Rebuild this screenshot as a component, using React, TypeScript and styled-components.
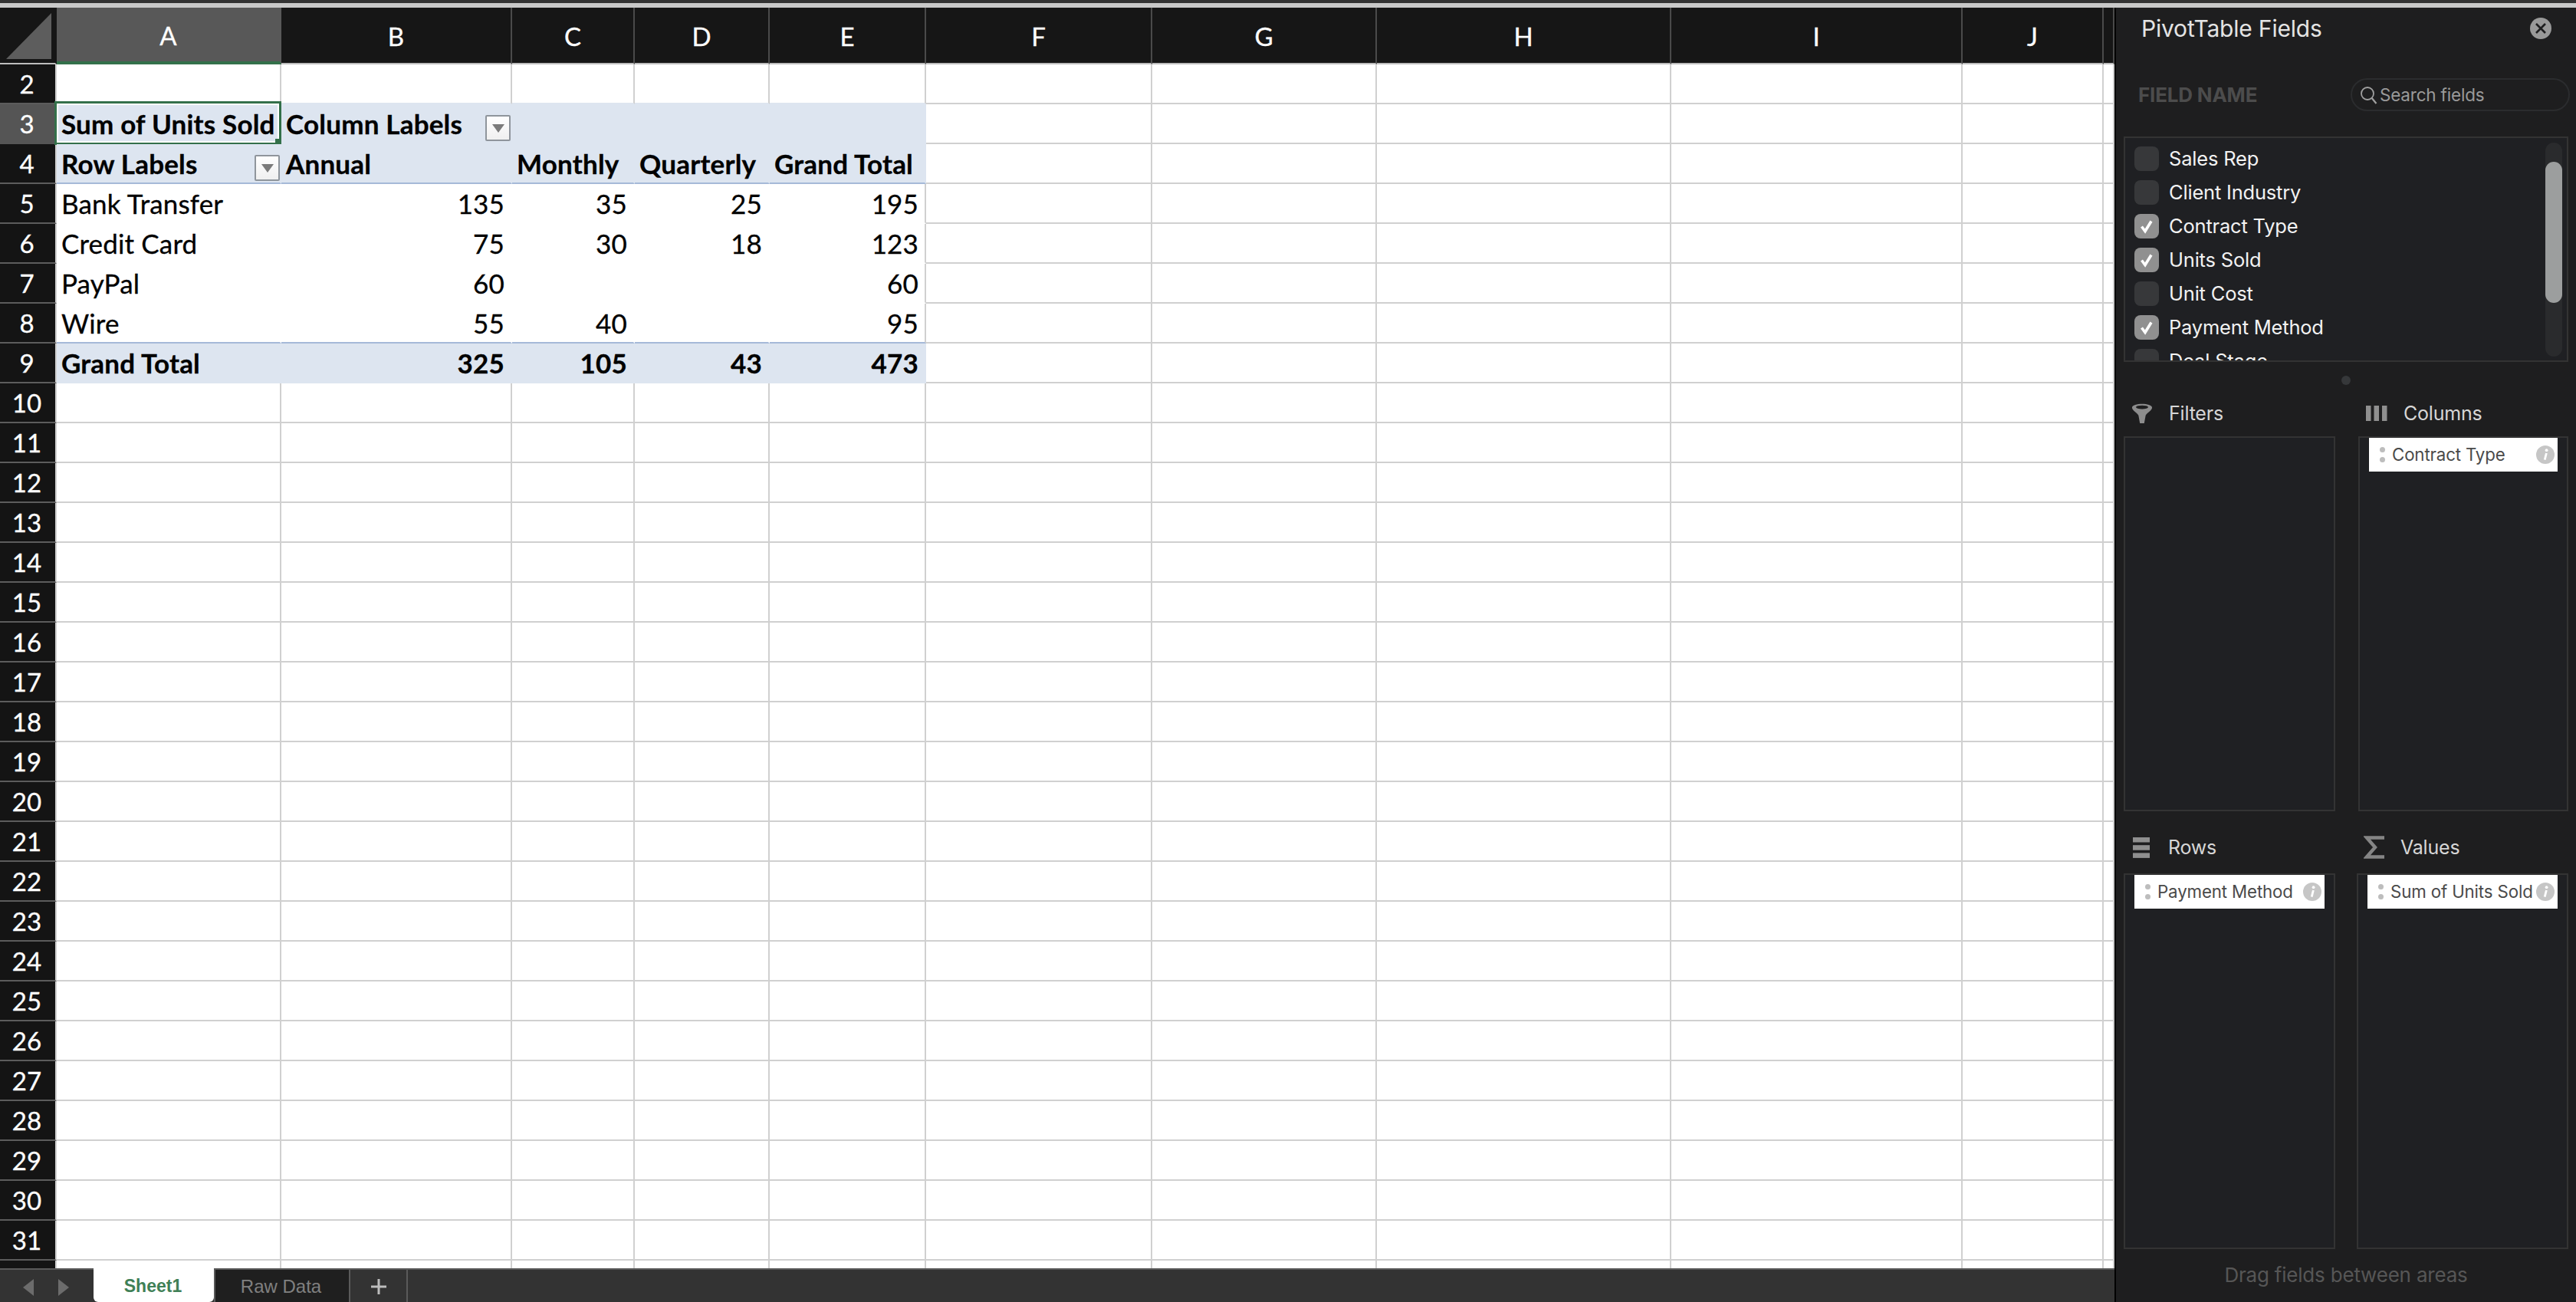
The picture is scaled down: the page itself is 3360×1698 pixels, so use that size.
import React from "react";
import styled, { createGlobalStyle } from "styled-components";

const Global = createGlobalStyle`
  html, body { margin: 0; padding: 0; height: 100%; background: #1e1e1f; overflow: hidden; }
  #root { height: 100%; }
  * { box-sizing: border-box; }
`;

const CELL_FONT = `Lato, "Open Sans", sans-serif`;
const UI_FONT = `Inter, "Liberation Sans", sans-serif`;
const COLS = [293, 301, 160, 176, 204, 295, 293, 384, 380, 184, 14];
const COL_LABELS = ["A", "B", "C", "D", "E", "F", "G", "H", "I", "J", ""];
const TEMPLATE = `74px ${COLS.map((c) => c + "px").join(" ")}`;
const GRID_LINE = "#d0d0d0";

const Page = styled.div`
  height: 1698px;
  width: 3360px;
  display: flex;
  flex-direction: column;
  overflow: hidden;
`;
const TopStrip = styled.div`
  height: 10px;
  flex: none;
  background: #333;
  border-bottom: 6px solid #c9c9c9;
`;
const Main = styled.div`
  flex: 1;
  min-height: 0;
  display: flex;
`;
const Sheet = styled.div`
  width: 2758px;
  flex: none;
  display: flex;
  flex-direction: column;
  background: #fff;
`;
const GridClip = styled.div`
  flex: 1;
  min-height: 0;
  overflow: hidden;
`;
const SheetGrid = styled.div`
  display: grid;
  grid-template-columns: ${TEMPLATE};
  grid-template-rows: 74px;
  grid-auto-rows: 52px;
  font-family: ${CELL_FONT};
`;
const Corner = styled.div`
  background: #161616;
  border-right: 2px solid #161616;
  border-bottom: 2px solid #bdbdbd;
  display: flex;
`;
const ColHead = styled.div<{ $active?: boolean }>`
  background: ${(p) => (p.$active ? "#585858" : "#161616")};
  color: #fff;
  font-size: 33px;
  -webkit-text-stroke: 0.3px #fff;
  display: flex;
  align-items: center;
  justify-content: center;
  padding-top: 2px;
  border-right: 2px solid ${(p) => (p.$active ? "#585858" : "#4a4a4a")};
  border-bottom: ${(p) => (p.$active ? "4px solid #33704a" : "2px solid #bdbdbd")};
`;
const RowHead = styled.div<{ $active?: boolean }>`
  background: ${(p) => (p.$active ? "#555" : "#141414")};
  color: #fff;
  font-size: 33px;
  -webkit-text-stroke: 0.3px #fff;
  display: flex;
  align-items: center;
  justify-content: center;
  padding-right: 2px;
  border-right: 2px solid #d0d0d0;
  border-bottom: 2px solid ${(p) => (p.$active ? "#555" : "#5c5c5c")};
`;

type Tone = "plain" | "above" | "fill" | "head" | "body" | "lastBody" | "total";
const bottomColor: Record<Tone, string> = {
  plain: GRID_LINE,
  above: "#dde5f0",
  fill: "#dde5f0",
  head: "#a5b9d8",
  body: "#fff",
  lastBody: "#a5b9d8",
  total: "#dde5f0",
};
const isStrong = (t: Tone) => t === "fill" || t === "head" || t === "total";
const Cell = styled.div<{ $tone: Tone; $right?: boolean; $edge?: boolean }>`
  position: relative;
  background: ${(p) => (isStrong(p.$tone) ? "#dde5f0" : "#fff")};
  color: #000;
  font-size: 35px;
  letter-spacing: ${(p) => (isStrong(p.$tone) ? "0.2px" : "0.15px")};
  -webkit-text-stroke: 0.3px #000;
  font-weight: ${(p) => (isStrong(p.$tone) ? 700 : 400)};
  white-space: nowrap;
  display: flex;
  align-items: center;
  justify-content: ${(p) => (p.$right ? "flex-end" : "space-between")};
  padding: 0 ${(p) => (p.$right ? "8px" : "0")} 0 6px;
  border-bottom: 2px solid ${(p) => bottomColor[p.$tone]};
  border-right: 2px solid
    ${(p) =>
      p.$tone === "plain" || p.$tone === "above" || (p.$edge && (p.$tone === "body" || p.$tone === "lastBody"))
        ? GRID_LINE
        : "transparent"};
`;
const Selection = styled.div`
  position: absolute;
  inset: -4px -2px -3px -3px;
  border: 3px solid #33704a;
  box-shadow: inset 0 0 0 2px #fff;
  pointer-events: none;
  &::after {
    content: "";
    position: absolute;
    right: -6px;
    bottom: -6px;
    width: 11px;
    height: 11px;
    background: #33704a;
  }
`;
const FilterBtn = styled.span`
  width: 33px;
  height: 34px;
  flex: none;
  margin-top: 12px;
  border: 2px solid #8f959c;
  border-radius: 2px;
  background: linear-gradient(#fff, #f0f0f0);
  display: flex;
  align-items: center;
  justify-content: center;
`;
const FilterArrow = styled.span`
  width: 0;
  height: 0;
  border-left: 8px solid transparent;
  border-right: 8px solid transparent;
  border-top: 11px solid #7b7b7b;
`;

const TabBar = styled.div`
  height: 44px;
  flex: none;
  display: flex;
  background: #333;
  border-top: 2px solid #5a5a5a;
  font-family: "Liberation Sans", Arial, sans-serif;
  font-size: 23px;
  position: relative;
  z-index: 1;
`;
const TabNav = styled.div`
  width: 122px;
  display: flex;
  align-items: center;
  padding: 4px 0 0 30px;
  gap: 32px;
`;
const Tab = styled.div<{ $active?: boolean }>`
  display: flex;
  align-items: center;
  justify-content: center;
  padding: 2px ${(p) => (p.$active ? "2px" : "3px")} 0 0;
  margin-top: ${(p) => (p.$active ? "-2px" : "0")};
  width: ${(p) => (p.$active ? "157px" : "176px")};
  background: ${(p) => (p.$active ? "#fff" : "#1f1f1f")};
  color: ${(p) => (p.$active ? "#3f8056" : "#808080")};
  font-size: ${(p) => (p.$active ? "23px" : "24px")};
  font-weight: ${(p) => (p.$active ? 700 : 400)};
  border-radius: ${(p) => (p.$active ? "0 0 6px 6px" : "0")};
  border-left: ${(p) => (p.$active ? "none" : "2px solid #5a5a5a")};
`;
const AddTab = styled.div`
  width: 77px;
  display: flex;
  align-items: center;
  justify-content: center;
  border-left: 2px solid #5a5a5a;
  border-right: 2px solid #5a5a5a;
  padding-top: 2px;
`;

const Panel = styled.aside`
  flex: 1;
  min-width: 0;
  display: flex;
  flex-direction: column;
  padding: 0 10px;
  background: #1e1e1f;
  border-left: 2px solid #000;
  font-family: ${UI_FONT};
`;
const TitleRow = styled.div`
  height: 54px;
  flex: none;
  display: flex;
  align-items: center;
  justify-content: space-between;
  padding: 0 22px 0 23px;
`;
const Title = styled.div`
  color: #e4e4e4;
  font-size: 30px;
  letter-spacing: -0.2px;
`;
const SearchRow = styled.div`
  margin-top: 38px;
  height: 43px;
  flex: none;
  display: flex;
  align-items: center;
  justify-content: space-between;
  padding-left: 19px;
  margin-right: -2px;
`;
const FieldName = styled.div`
  color: #4c4c4c;
  font-size: 26px;
  font-weight: 700;
  letter-spacing: -0.2px;
`;
const SearchBox = styled.div`
  width: 286px;
  height: 43px;
  border: 2px solid #2b2c2e;
  border-radius: 22px;
  display: flex;
  align-items: center;
  padding-left: 10px;
  gap: 3px;
  color: #9a9a9a;
  font-size: 22.5px;
  letter-spacing: -0.2px;
`;
const FieldBox = styled.div`
  margin-top: 33px;
  height: 294px;
  flex: none;
  border: 2px solid #333;
  background: #1f2023;
  overflow: hidden;
  position: relative;
  padding: 11px 0 0 12px;
`;
const FieldRow = styled.div`
  height: 44px;
  display: flex;
  align-items: flex-start;
  gap: 13px;
  color: #f2f2f2;
  font-size: 25.5px;
  letter-spacing: -0.2px;
  line-height: 32px;
`;
const Box = styled.span<{ $on?: boolean }>`
  width: 32px;
  height: 32px;
  flex: none;
  border-radius: 8px;
  background: ${(p) => (p.$on ? "#909090" : "#37383a")};
  display: flex;
  align-items: center;
  justify-content: center;
`;
const ScrollTrack = styled.div`
  position: absolute;
  top: 6px;
  right: 6px;
  width: 22px;
  height: 279px;
  border-radius: 11px;
  background: #2a2b2d;
`;
const ScrollThumb = styled.div`
  position: absolute;
  top: 25px;
  left: 0;
  width: 22px;
  height: 184px;
  border-radius: 11px;
  background: #9c9e9e;
`;
const Splitter = styled.div`
  height: 53px;
  flex: none;
  display: flex;
  justify-content: center;
  padding-top: 18px;
`;
const Dot = styled.span`
  width: 12px;
  height: 12px;
  border-radius: 50%;
  background: #36383a;
`;
const Areas = styled.div`
  display: grid;
  grid-template-columns: 276px 274px;
  column-gap: 30px;
  grid-template-rows: auto auto;
  row-gap: 33px;
`;
const Area = styled.section<{ $shift?: boolean }>`
  display: flex;
  flex-direction: column;
  margin-left: ${(p) => (p.$shift ? "-2px" : "0")};
`;
const AreaLabel = styled.div<{ $tight?: boolean; $gap?: number }>`
  height: 30px;
  flex: none;
  display: flex;
  align-items: center;
  gap: ${(p) => p.$gap ?? 21}px;
  padding: 0 0 2px ${(p) => (p.$tight ? "9px" : "10px")};
  margin-bottom: ${(p) => (p.$tight ? "18px" : "14px")};
  color: #d6d6d6;
  font-size: 25px;
  letter-spacing: -0.2px;
`;
const IconSlot = styled.span`
  width: 28px;
  height: 30px;
  flex: none;
  display: flex;
  align-items: center;
  justify-content: center;
`;
const Drop = styled.div<{ $h: number }>`
  height: ${(p) => p.$h}px;
  border: 2px solid #333;
  background: #1f2023;
`;
const Chip = styled.div`
  height: 44px;
  margin: 0 12px;
  background: #fff;
  color: #4a4a4a;
  font-size: 22.3px;
  letter-spacing: -0.15px;
  white-space: nowrap;
  display: flex;
  align-items: center;
  padding: 0 4px 0 14px;
  gap: 9px;
`;
const ChipLabel = styled.span`
  flex: 1;
  min-width: 0;
  padding-bottom: 2px;
`;
const Grip = styled.span`
  width: 7px;
  height: 20px;
  flex: none;
  display: flex;
  flex-direction: column;
  justify-content: space-between;
  &::before,
  &::after {
    content: "";
    width: 7px;
    height: 7px;
    border-radius: 50%;
    background: #bdbdbd;
  }
`;
const Footer = styled.div`
  flex: 1;
  display: flex;
  align-items: center;
  justify-content: center;
  padding-bottom: 3px;
  color: #565656;
  font-size: 26px;
  letter-spacing: -0.2px;
`;

const Check = () => (
  <svg width="20" height="20" viewBox="0 0 20 20" fill="none">
    <path d="M3.5 10.5 L8 16.5 L16 3.5" stroke="#fff" strokeWidth="3.6" />
  </svg>
);
const CloseIcon = () => (
  <svg width="28" height="28" viewBox="0 0 28 28">
    <circle cx="14" cy="14" r="14" fill="#999" />
    <path d="M8 8 L20 20 M20 8 L8 20" stroke="#1e1e1f" strokeWidth="2.6" />
  </svg>
);
const SearchIcon = () => (
  <svg width="23" height="24" viewBox="0 0 23 24" fill="none" stroke="#a0a0a0" strokeWidth="1.8">
    <circle cx="10" cy="10" r="8" />
    <path d="M15.8 16 L21.5 23" strokeWidth="2.2" />
  </svg>
);
const FunnelIcon = () => (
  <svg width="30" height="30" viewBox="0 0 30 30">
    <path d="M1 7 C1 0 29 0 29 7 C29 11 21 15 20 18 L18 29 L12 29 L10 18 C9 15 1 11 1 7 Z" fill="#8d8d8d" />
    <ellipse cx="15" cy="6.5" rx="8.5" ry="2.6" fill="#1e1e1f" />
  </svg>
);
const ColumnsIcon = () => (
  <svg width="28" height="20" viewBox="0 0 28 20" fill="#8f8f8f">
    <rect x="0" y="0" width="6.5" height="20" />
    <rect x="10.5" y="0" width="6.5" height="20" />
    <rect x="21" y="0" width="6.5" height="20" />
  </svg>
);
const RowsIcon = () => (
  <svg width="22" height="27" viewBox="0 0 22 27" fill="#8f8f8f">
    <rect x="0" y="0" width="22" height="6.5" />
    <rect x="0" y="10.2" width="22" height="6.5" />
    <rect x="0" y="20.4" width="22" height="6.5" />
  </svg>
);
const SigmaIcon = () => (
  <svg width="28" height="30" viewBox="0 0 28 30" fill="none" stroke="#858585" strokeWidth="4.4">
    <path d="M27 2.5 H4 L15 15 L4 27.5 H27" />
  </svg>
);
const InfoIcon = () => (
  <svg width="24" height="24" viewBox="0 0 24 24" style={{ flex: "none" }}>
    <circle cx="12" cy="12" r="12" fill="#c6c6c6" />
    <circle cx="13.6" cy="6.2" r="1.9" fill="#fff" />
    <path d="M13.4 10 L11.2 18.6" stroke="#fff" strokeWidth="2.8" />
  </svg>
);
const Triangle = () => (
  <svg width="72" height="72" viewBox="0 0 72 72">
    <path d="M67 7 V67 H8 Z" fill="#5d5d5d" />
  </svg>
);
const NavArrow = ({ flip }: { flip?: boolean }) => (
  <svg width="14" height="22" viewBox="0 0 14 22">
    <path d={flip ? "M0 0 L14 11 L0 22 Z" : "M14 0 L0 11 L14 22 Z"} fill="#6c6c6c" />
  </svg>
);
const Plus = () => (
  <svg width="20" height="20" viewBox="0 0 20 20" fill="#bdbdbd">
    <rect x="8.5" y="0" width="3" height="20" />
    <rect x="0" y="8.5" width="20" height="3" />
  </svg>
);

type Row = { n: number; tone: Tone; cells: string[] };
const pivot: Row[] = [
  { n: 5, tone: "body", cells: ["Bank Transfer", "135", "35", "25", "195"] },
  { n: 6, tone: "body", cells: ["Credit Card", "75", "30", "18", "123"] },
  { n: 7, tone: "body", cells: ["PayPal", "60", "", "", "60"] },
  { n: 8, tone: "lastBody", cells: ["Wire", "55", "40", "", "95"] },
  { n: 9, tone: "total", cells: ["Grand Total", "325", "105", "43", "473"] },
];
const fields: [string, boolean][] = [
  ["Sales Rep", false],
  ["Client Industry", false],
  ["Contract Type", true],
  ["Units Sold", true],
  ["Unit Cost", false],
  ["Payment Method", true],
  ["Deal Stage", false],
];
const PLAIN_TAIL = COLS.length - 5;

const Tail = ({ row }: { row: number }) => (
  <>
    {Array.from({ length: PLAIN_TAIL }, (_, i) => (
      <Cell key={`${row}-t${i}`} $tone="plain" />
    ))}
  </>
);

const Chipped = ({ label }: { label: string }) => (
  <Chip>
    <Grip />
    <ChipLabel>{label}</ChipLabel>
    <InfoIcon />
  </Chip>
);

export default function App() {
  const blanks = Array.from({ length: 22 }, (_, i) => i + 10);
  return (
    <Page>
      <Global />
      <TopStrip />
      <Main>
        <Sheet>
          <GridClip>
            <SheetGrid>
              <Corner>
                <Triangle />
              </Corner>
              {COL_LABELS.map((c, i) => (
                <ColHead key={i} $active={c === "A"}>
                  {c}
                </ColHead>
              ))}

              <RowHead>2</RowHead>
              {[0, 1, 2, 3, 4].map((i) => (
                <Cell key={i} $tone="above" />
              ))}
              <Tail row={2} />

              <RowHead $active>3</RowHead>
              <Cell $tone="fill">
                Sum of Units Sold
                <Selection />
              </Cell>
              <Cell $tone="fill">
                Column Labels
                <FilterBtn>
                  <FilterArrow />
                </FilterBtn>
              </Cell>
              <Cell $tone="fill" />
              <Cell $tone="fill" />
              <Cell $tone="fill" />
              <Tail row={3} />

              <RowHead>4</RowHead>
              <Cell $tone="head">
                Row Labels
                <FilterBtn>
                  <FilterArrow />
                </FilterBtn>
              </Cell>
              <Cell $tone="head">Annual</Cell>
              <Cell $tone="head">Monthly</Cell>
              <Cell $tone="head">Quarterly</Cell>
              <Cell $tone="head">Grand Total</Cell>
              <Tail row={4} />

              {pivot.map((r) => (
                <React.Fragment key={r.n}>
                  <RowHead>{r.n}</RowHead>
                  {r.cells.map((c, i) => (
                    <Cell key={i} $tone={r.tone} $right={i > 0} $edge={i === 4}>
                      {c}
                    </Cell>
                  ))}
                  <Tail row={r.n} />
                </React.Fragment>
              ))}

              {blanks.map((n) => (
                <React.Fragment key={n}>
                  <RowHead>{n}</RowHead>
                  {COLS.map((_, i) => (
                    <Cell key={i} $tone="plain" />
                  ))}
                </React.Fragment>
              ))}

              <RowHead />
              {COLS.map((_, i) => (
                <Cell key={i} $tone="plain" />
              ))}
            </SheetGrid>
          </GridClip>
          <TabBar>
            <TabNav>
              <NavArrow />
              <NavArrow flip />
            </TabNav>
            <Tab $active>Sheet1</Tab>
            <Tab>Raw Data</Tab>
            <AddTab>
              <Plus />
            </AddTab>
          </TabBar>
        </Sheet>

        <Panel>
          <TitleRow>
            <Title>PivotTable Fields</Title>
            <CloseIcon />
          </TitleRow>
          <SearchRow>
            <FieldName>FIELD NAME</FieldName>
            <SearchBox>
              <SearchIcon />
              Search fields
            </SearchBox>
          </SearchRow>
          <FieldBox>
            {fields.map(([name, on]) => (
              <FieldRow key={name}>
                <Box $on={on}>{on && <Check />}</Box>
                {name}
              </FieldRow>
            ))}
            <ScrollTrack>
              <ScrollThumb />
            </ScrollTrack>
          </FieldBox>
          <Splitter>
            <Dot />
          </Splitter>
          <Areas>
            <Area>
              <AreaLabel>
                <IconSlot>
                  <FunnelIcon />
                </IconSlot>
                Filters
              </AreaLabel>
              <Drop $h={489} />
            </Area>
            <Area>
              <AreaLabel $gap={21}>
                <IconSlot>
                  <ColumnsIcon />
                </IconSlot>
                Columns
              </AreaLabel>
              <Drop $h={489}>
                <Chipped label="Contract Type" />
              </Drop>
            </Area>
            <Area>
              <AreaLabel $tight>
                <IconSlot>
                  <RowsIcon />
                </IconSlot>
                Rows
              </AreaLabel>
              <Drop $h={490}>
                <Chipped label="Payment Method" />
              </Drop>
            </Area>
            <Area $shift>
              <AreaLabel $tight $gap={20}>
                <IconSlot>
                  <SigmaIcon />
                </IconSlot>
                Values
              </AreaLabel>
              <Drop $h={490}>
                <Chipped label="Sum of Units Sold" />
              </Drop>
            </Area>
          </Areas>
          <Footer>Drag fields between areas</Footer>
        </Panel>
      </Main>
    </Page>
  );
}
